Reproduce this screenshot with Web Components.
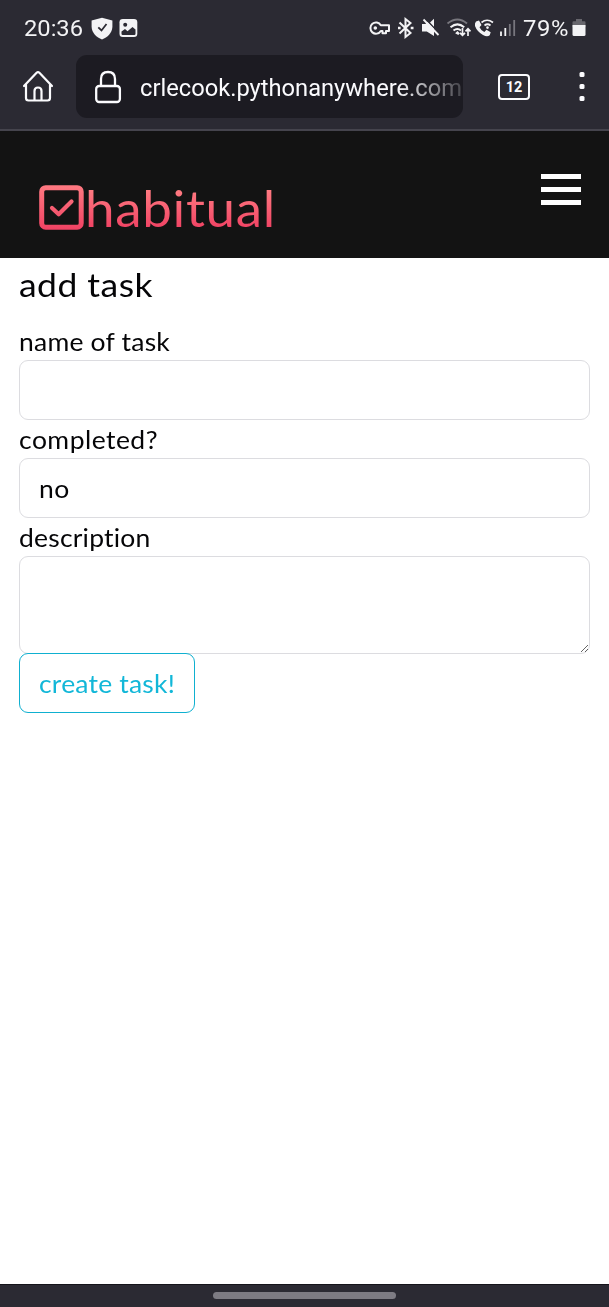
<!DOCTYPE html>
<html lang="en">
<head>
<meta charset="utf-8">
<title>habitual</title>
<style>
html,body{margin:0;height:100%;background:#fff}
body{font-family:Lato,"Open Sans",sans-serif;color:#050507}
</style>
</head>
<body>
<phone-screen>
  <status-bar slot="top"></status-bar>
  <browser-toolbar slot="top"></browser-toolbar>
  <site-header slot="top"></site-header>
  <task-form></task-form>
  <gesture-bar slot="bottom"></gesture-bar>
</phone-screen>
<script>
const define = (name, html, setup) => customElements.define(name, class extends HTMLElement {
  connectedCallback() {
    if (this.shadowRoot) return;
    const t = document.createElement('template');
    t.innerHTML = html;
    this.attachShadow({mode: 'open'}).append(t.content.cloneNode(true));
    if (setup) setup(this);
  }
});

/* Text run widened to a given width, partly by glyph width and partly by tracking. */
define('wide-text', `<style>:host{display:inline-block;white-space:nowrap}span{display:inline-block;transform-origin:0 50%;background:var(--text-fill,none);-webkit-background-clip:text;background-clip:text}</style><span><slot></slot></span>`, el => {
  const span = el.shadowRoot.querySelector('span');
  const w = span.getBoundingClientRect().width, target = +el.getAttribute('width');
  const scale = Math.min(target / w, 1.06);
  span.style.letterSpacing = ((target / scale - w) / el.textContent.length) + 'px';
  span.style.transform = `scaleX(${scale})`;
  el.style.width = target + 'px';
});

define('phone-screen', `<style>
:host{display:flex;flex-direction:column;height:100vh;min-height:1307px;overflow:hidden}
main{flex:1}
</style><slot name="top"></slot><main><slot></slot></main><slot name="bottom"></slot>`);

define('status-bar', `<style>
:host{display:flex;height:55px;background:#2b2a33;color:#f3f3f5;font:22.5px/55px Roboto,sans-serif;box-sizing:border-box;padding:0 23px 0 24px}
.l,.r{display:flex;align-items:center;height:56px}.r{margin-left:auto}
svg{display:block;flex:none}
.shield{margin-left:8px}.pic{margin-left:6px}
</style>
<div class="l"><wide-text width="59">20:36</wide-text>
<svg class="shield" width="22" height="23" viewBox="0 0 22 23"><path d="M11 .8 21.4 3.6V10C21 16 16.500 20.500 11 22.400 5.500 20.500 1 16 .6 10V3.600Z" fill="#f3f3f5"/><path d="m7.300 10.300 3.200 3.200 5-6.500" fill="none" stroke="#2b2a33" stroke-width="1.800"/></svg>
<svg class="pic" width="19" height="20" viewBox="0 0 19 20"><rect x=".5" y="1" width="17.800" height="18" rx="3.300" fill="#f3f3f5"/><circle cx="6.200" cy="6.700" r="2" fill="#2b2a33"/><path d="M2.500 13.500 6 11l2.500 2.300L13.500 9l3 2.500v4.300q0 1.200-1.200 1.200H3.700q-1.200 0-1.200-1.200Z" fill="#2b2a33"/></svg></div>
<div class="r">
<svg width="154" height="30" viewBox="365 13 154 30" fill="none" stroke="#f3f3f5" stroke-width="2">
<path d="M379.800 25.200A5.600 5.600 0 1 0 379.800 31H381.500V33.300H385V31H388V25.200Z" stroke-linejoin="round"/><circle cx="374.300" cy="28" r="1.800" fill="#f3f3f5" stroke="none"/>
<path d="m398.500 22.500 11 10.500-5 4V19l5 4-11 10.500"/><path d="M397 28h2.600M409.700 28h2.800" stroke-width="2.600"/>
<path d="M421 24h3.500l2-2 6.500 6.800V36l-7.200-4.500H421ZM429 22.500l4-3.700v8Z" fill="#f3f3f5" stroke="none"/><path d="m422.500 19.500 15 15.500" stroke-width="1.800"/>
<path d="M446.500 23.500Q456.500 15.500 466 23.500" stroke="#77767d"/><path d="M449.500 27.200Q456.500 21.500 463.200 27.200M452.500 30.500Q456.500 27.500 460 30.500"/><path d="m456.500 31 2.300 2.300-1.500 1.700-3.200-1.700Z" fill="#f3f3f5" stroke="none"/>
<path d="M461.500 28v7M459 32.800l2.500 2.500 2.500-2.500M467 36v-7M464.500 31.300l2.500-2.500 2.500 2.500" stroke-width="1.700"/>
<path d="m475 21.500 3-1 2.500 4.500-2 2.200q1.500 3.300 4.800 4.800l2.200-2.200 4.200 2.500-1 3q-2.500 2.200-6.700-.3-6-3.500-8-9-.5-3 1-4.500Z" fill="#f3f3f5" stroke="none"/>
<path d="M480.500 22.500Q486 18 492 22.500M483.500 25.500Q486.500 23 489.500 25.500" stroke-width="1.700"/><circle cx="486.500" cy="27.600" r="1.300" fill="#f3f3f5" stroke="none"/>
<path d="M500 31.500V36M504.300 28v8" stroke-width="1.800"/><path d="M508.800 24v12M513.200 20v16" stroke="#77767d" stroke-width="1.800"/>
</svg>
<wide-text width="46" style="margin-left:3px">79%</wide-text>
<svg width="14" height="18" viewBox="0 0 14 18" style="margin:0 0 0 3px"><path d="M4 0h6v2.200h2.500q1 0 1 1V8H.5V3.200q0-1 1-1H4Z" fill="#67666d"/><path d="M.5 6h13v9.500q0 1.500-1.500 1.500H2Q.5 17 .5 15.500Z" fill="#f3f3f5"/></svg>
</div>`);

define('browser-toolbar', `<style>
:host{display:flex;box-sizing:border-box;height:76px;background:#2b2a33;border-bottom:2px solid #45444d;color:#fbfbfe;font-family:Roboto,sans-serif}
svg{display:block;flex:none}
.home{margin:14px 0 0 22px}
.url{width:387px;height:63px;margin-left:22px;background:#1c1b22;border-radius:11px;display:flex;overflow:hidden}
.lock{margin:14px 0 0 18px}
.addr{margin-left:18px;font-size:24.500px;line-height:66px;width:321px;flex:none;overflow:hidden;-webkit-mask:linear-gradient(90deg,#000 80%,rgba(0,0,0,.2) 100%);mask:linear-gradient(90deg,#000 80%,rgba(0,0,0,.2) 100%)}
.tabs{box-sizing:border-box;width:32px;height:26px;border:2px solid #fbfbfe;border-radius:4px;margin:19px 0 0 35px;font-weight:700;font-size:14.500px;line-height:23px;text-align:center}
.dots{margin:15px 0 0 47.500px}
</style>
<svg class="home" width="32" height="35" viewBox="22 69 32 35" fill="none" stroke="#fbfbfe" stroke-width="2.200" stroke-linecap="round" stroke-linejoin="round"><path d="m24 86 12.600-13.300q1.400-1.300 2.800 0L52 86M26 84.500V98q0 2.500 2.500 2.500h19Q50 100.500 50 98V84.500M34.500 100v-9q0-3.500 3.500-3.500t3.500 3.500v9"/></svg>
<div class="url"><svg class="lock" width="28" height="36" viewBox="94 69 28 36" fill="none" stroke="#fbfbfe" stroke-width="2.300"><rect x="96.200" y="86" width="23.700" height="16" rx="3"/><path d="M101 86v-7q0-7 7-7t7 7v7"/></svg>
<div class="addr"><wide-text width="322">crlecook.pythonanywhere.com</wide-text></div></div>
<div class="tabs">12</div>
<svg class="dots" width="8" height="36" viewBox="0 0 8 36" fill="#fbfbfe"><rect x="1.500" y="2" width="5" height="5" rx="1.500"/><rect x="1.500" y="14" width="5" height="5" rx="1.500"/><rect x="1.500" y="26" width="5" height="5" rx="1.500"/></svg>`);

define('site-header', `<style>
:host{display:flex;box-sizing:border-box;height:127px;background:#131313;padding:43px 28px 0 39px;justify-content:space-between;align-items:flex-start}
.brand{display:flex;padding-top:10px}
svg{display:block}
.name{margin:-9px 0 0 1px;font-size:50px;line-height:67px;height:67px}
.name wide-text{--text-fill:linear-gradient(#ff7b82 22%,#f04263 80%);color:transparent}
.menu{display:grid;gap:8px;width:40px}.menu i{height:5px;background:#fff}
</style>
<div class="brand"><svg width="45" height="46" viewBox="0 0 45 46" fill="none" stroke="url(#g)" stroke-linecap="round" stroke-linejoin="round"><defs><linearGradient id="g" gradientUnits="userSpaceOnUse" x1="0" y1="0" x2="0" y2="46"><stop stop-color="#ff7b82"/><stop offset="1" stop-color="#f04263"/></linearGradient></defs><rect x="2.700" y="3.700" width="39.500" height="39.500" rx="4" stroke-width="5"/><path d="m13 24 6.700 6.300L32.500 17.600" stroke-width="4.200"/></svg>
<div class="name"><wide-text width="191">habitual</wide-text></div></div>
<div class="menu"><i></i><i></i><i></i></div>`);

define('form-field', `<style>
:host{display:block}
label{display:block;height:40px;font-size:25px;line-height:42px}
</style><label><slot name="label"></slot></label><slot></slot>`);

define('task-form', `<style>
:host{display:block;padding:0 19px}
h1{margin:0;height:62px;font-weight:400;font-size:33.500px;line-height:52px}
input,.select,textarea{display:block;box-sizing:border-box;width:571px;height:59.500px;margin:0;border:1px solid #dcdce0;border-radius:9px;background:#fff;font:25px/58px Lato,sans-serif;color:#050507;padding:0 19px;outline:0}
textarea{height:98px;resize:vertical}
form-field{height:98px}
button{display:block;box-sizing:border-box;width:176px;height:60px;margin-top:-1px;position:relative;border:1.500px solid #0fb0d0;border-radius:9px;background:#fff;color:#12b7d8;font:25px/57px Lato,sans-serif;padding:0 0 0 19px;text-align:left}
</style>
<h1><wide-text width="134">add task</wide-text></h1>
<form-field><wide-text slot="label" width="151">name of task</wide-text><input aria-label="name of task"></form-field>
<form-field><wide-text slot="label" width="139">completed?</wide-text><div class="select"><wide-text width="31">no</wide-text></div></form-field>
<form-field style="height:138px"><wide-text slot="label" width="132">description</wide-text><textarea aria-label="description"></textarea></form-field>
<button type="button"><wide-text width="136">create task!</wide-text></button>`);

define('gesture-bar', `<style>
:host{display:flex;justify-content:center;height:23px;box-sizing:border-box;background:#2b2a33;border-top:1px solid #15141b}
i{width:183px;height:7px;border-radius:4px;background:#7d7b83;margin-top:7px}
</style><i></i>`);
</script>
</body>
</html>
